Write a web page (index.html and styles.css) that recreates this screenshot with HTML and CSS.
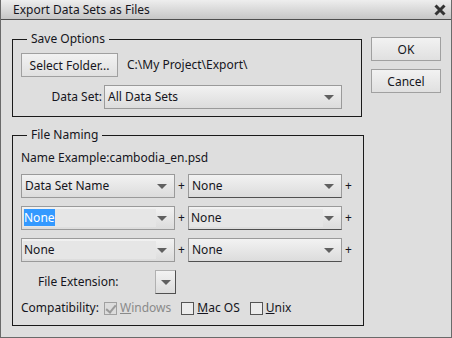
FILE: index.html
```html
<!DOCTYPE html>
<html lang="en">
<head>
    <meta charset="UTF-8">
    <title>Export Data Sets as Files</title>
    <link rel="stylesheet" href="styles.css">
</head>
<body>
    <div class="window">
        <div class="titlebar">
            <span class="title">Export Data Sets as Files</span>
            <svg class="close" width="12" height="12" viewBox="0 0 12 12">
                <path d="M1.5 1.5 L10.5 10.5 M10.5 1.5 L1.5 10.5" stroke="#333" stroke-width="3"/>
            </svg>
        </div>

        <div class="dialog-body">
            <div class="main-col">
                <!-- Save Options -->
                <fieldset class="group save-group">
                    <legend>Save Options</legend>
                    <div class="row">
                        <button class="btn folder-btn">Select Folder...</button>
                        <span class="path">C:\My Project\Export\</span>
                    </div>
                    <div class="row dataset-row">
                        <label class="dataset-label">Data Set:</label>
                        <div class="dropdown wide">
                            <span class="value">All Data Sets</span>
                            <span class="arrow"></span>
                        </div>
                    </div>
                </fieldset>

                <!-- File Naming -->
                <fieldset class="group naming-group">
                    <legend>File Naming</legend>
                    <div class="example">Name Example:cambodia_en.psd</div>

                    <div class="name-row">
                        <div class="dropdown"><span class="value">Data Set Name</span><span class="arrow"></span></div>
                        <span class="plus">+</span>
                        <div class="dropdown dark"><span class="value">None</span><span class="arrow"></span></div>
                        <span class="plus">+</span>
                    </div>
                    <div class="name-row">
                        <div class="dropdown editable"><span class="value"><span class="selected">None</span></span><span class="arrow"></span></div>
                        <span class="plus">+</span>
                        <div class="dropdown dark editable"><span class="value">None</span><span class="arrow"></span></div>
                        <span class="plus">+</span>
                    </div>
                    <div class="name-row">
                        <div class="dropdown editable"><span class="value">None</span><span class="arrow"></span></div>
                        <span class="plus">+</span>
                        <div class="dropdown dark"><span class="value">None</span><span class="arrow"></span></div>
                        <span class="plus">+</span>
                    </div>

                    <div class="ext-row">
                        <span class="ext-label">File Extension:</span>
                        <div class="dropdown small"><span class="arrow"></span></div>
                    </div>

                    <div class="compat-row">
                        <span class="compat-label">Compatibility:</span>
                        <span class="check disabled checked"></span>
                        <span class="check-text disabled"><u>W</u>indows</span>
                        <span class="check"></span>
                        <span class="check-text"><u>M</u>ac OS</span>
                        <span class="check"></span>
                        <span class="check-text"><u>U</u>nix</span>
                    </div>
                </fieldset>
            </div>

            <div class="side-col">
                <button class="btn side-btn">OK</button>
                <button class="btn side-btn">Cancel</button>
            </div>
        </div>
    </div>
</body>
</html>
```

FILE: styles.css
```css
body {
    margin: 0;
    padding: 0;
    font-family: "Noto Sans", "Liberation Sans", sans-serif;
    font-size: 12px;
    line-height: 14px;
    color: #151520;
    background: #dedede;
}
.window {
    width: 452px;
    height: 338px;
    box-sizing: border-box;
    border: 1px solid #6a6a6a;
    border-top: none;
    background: #dedede;
}
.titlebar {
    height: 19px;
    border-bottom: 1px solid #4e4e4e;
    background: linear-gradient(#eeeeee, #c6c6c6);
    display: flex;
    align-items: center;
    justify-content: space-between;
    padding: 0 5px 0 12px;
}
.title {
    font-size: 12px;
}
.close {
    margin-top: 1px;
}
.dialog-body {
    display: flex;
    padding: 12px 0 0 11px;
}
.main-col {
    width: 350px;
    display: flex;
    flex-direction: column;
    gap: 11px;
}
.side-col {
    display: flex;
    flex-direction: column;
    gap: 8px;
    margin-left: 9px;
    padding-top: 5px;
}
.group {
    margin: 0;
    border: 1px solid #1a1a1a;
    padding: 0 8px 7px 8px;
}
.naming-group {
    padding-bottom: 10px;
}
.group legend {
    margin-left: 6px;
    padding: 0 4px;
    line-height: 14px;
}
.btn {
    font-family: inherit;
    font-size: 12px;
    color: #151520;
    border: 1px solid #a0a0a0;
    background: linear-gradient(#f2f2f2, #e0e0e0);
    padding: 0;
    height: 24px;
    margin: 0;
}
.side-btn {
    width: 70px;
}
.row {
    display: flex;
    align-items: center;
}
.save-group .row:first-of-type {
    margin-top: 7px;
}
.folder-btn {
    width: 97px;
}
.path {
    margin-left: 9px;
}
.dataset-row {
    margin-top: 8px;
}
.dataset-label {
    width: 81px;
    text-align: right;
    margin-right: 2px;
}
.dropdown {
    position: relative;
    width: 154px;
    height: 24px;
    box-sizing: border-box;
    border: 1px solid #9a9a9a;
    background: linear-gradient(#f2f2f2, #dcdcdc);
    display: flex;
    align-items: center;
}
.dropdown.wide {
    width: 238px;
}
.dropdown.dark {
    border-color: #9a9a9a #9a9a9a #505050 #9a9a9a;
}
.dropdown.small {
    width: 21px;
    border-color: #b0b0b0 #505050 #505050 #b0b0b0;
}
.dropdown .value {
    flex: 1;
    padding-left: 3px;
}
.dropdown.editable .value {
    margin: 2px 0 2px 1px;
    padding-left: 1px;
    height: 18px;
    line-height: 17px;
    background: #e6e6e6;
    flex: 0 0 132px;
}
.selected {
    background: #3399ff;
    color: #fff;
}
.arrow {
    width: 0;
    height: 0;
    border-left: 5px solid transparent;
    border-right: 5px solid transparent;
    border-top: 5px solid #606060;
    margin-left: auto;
    margin-right: 7px;
}
.dropdown.small .arrow {
    margin: 0 auto;
}
.example {
    margin-top: 9px;
}
.name-row {
    display: flex;
    align-items: center;
    margin-top: 8px;
}
.example + .name-row {
    margin-top: 9px;
}
.plus {
    width: 13px;
    text-align: center;
}
.ext-row {
    display: flex;
    align-items: center;
    margin-top: 8px;
}
.ext-label {
    padding-left: 17px;
    width: 117px;
}
.compat-row {
    display: flex;
    align-items: center;
    margin-top: 7px;
}
.compat-label {
    width: 83px;
}
.check {
    width: 11px;
    height: 11px;
    border: 1px solid #555;
    background: #ececec;
    margin-right: 3px;
    position: relative;
}
.check.disabled {
    border-color: #a0a0a0;
    background: #dcdcdc;
}
.check.checked::after {
    content: "";
    position: absolute;
    left: 3px;
    top: 0;
    width: 4px;
    height: 8px;
    border-right: 2px solid #9a9a9a;
    border-bottom: 2px solid #9a9a9a;
    transform: rotate(40deg);
}
.check-text {
    margin-right: 10px;
}
.check-text.disabled {
    color: #8a8a8a;
}
```
